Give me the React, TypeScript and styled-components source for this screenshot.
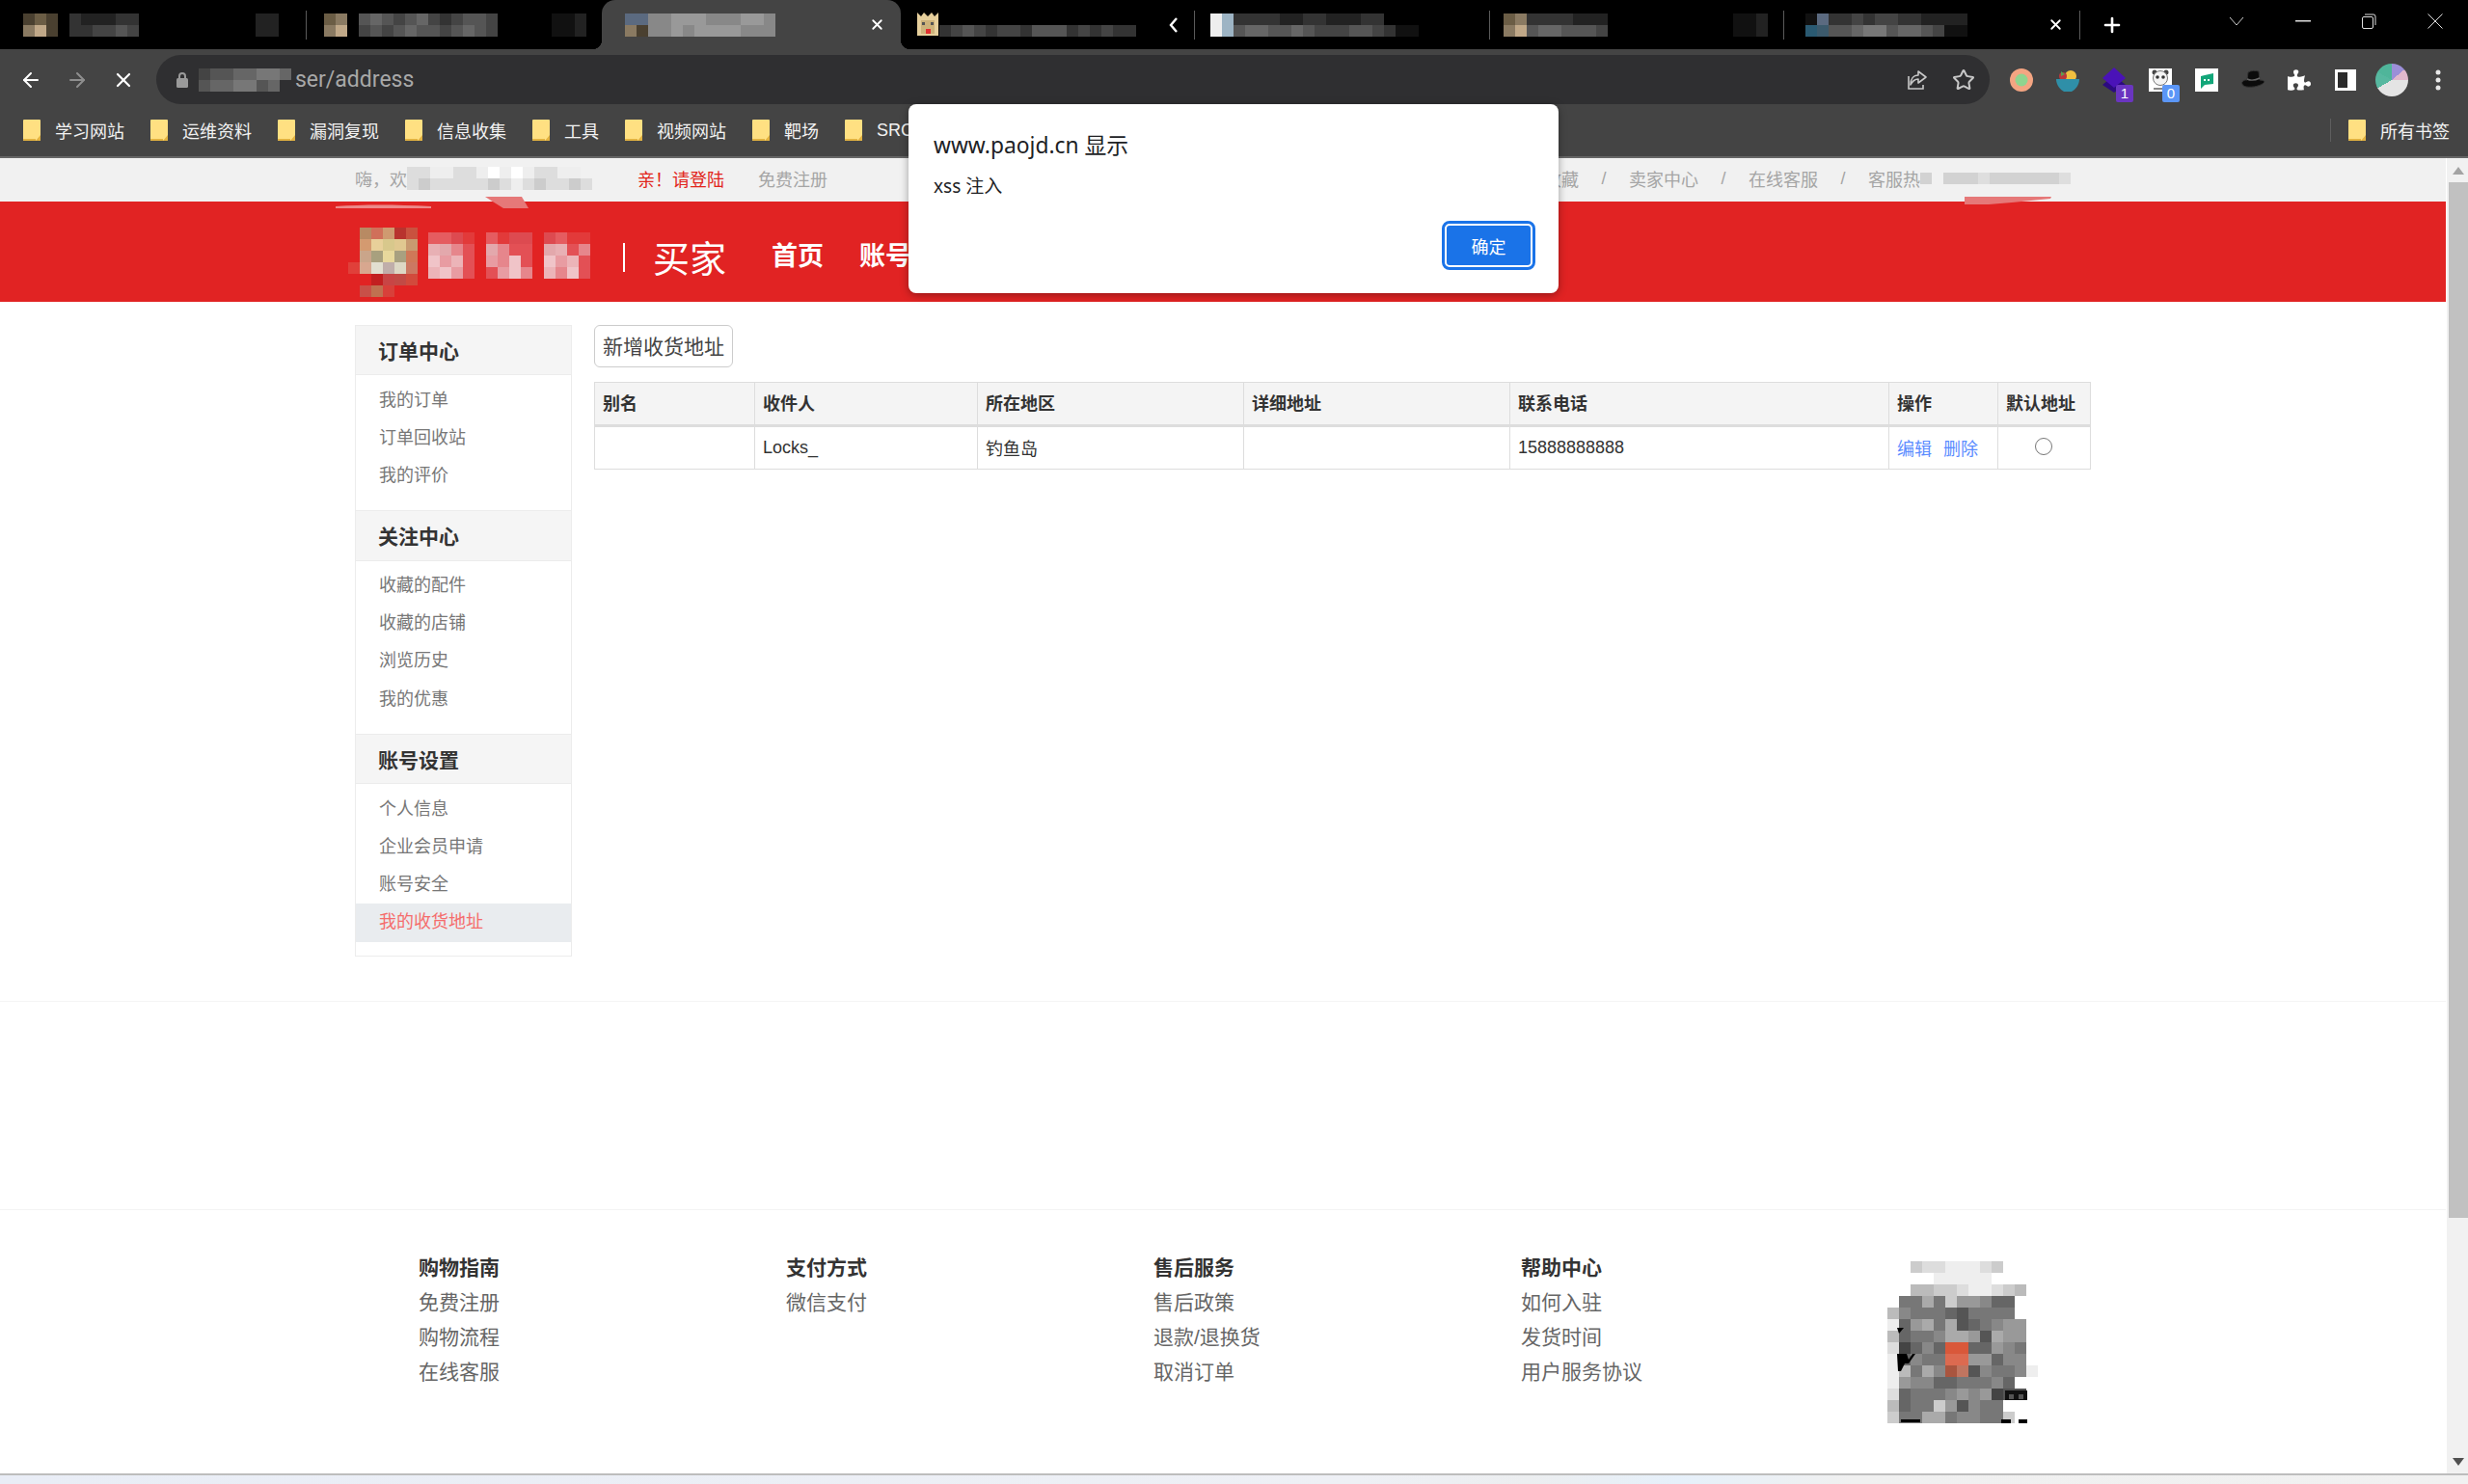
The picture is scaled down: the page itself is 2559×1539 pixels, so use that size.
import React from 'react';
import styled, { createGlobalStyle, css } from 'styled-components';
import { ArrowLeft, ArrowRight, Plus, Star, X } from 'lucide-react';
import { FaPuzzlePiece } from 'react-icons/fa';

const GlobalStyle = createGlobalStyle`
  html, body {
    margin: 0;
    padding: 0;
    background: #000;
  }
  * {
    box-sizing: border-box;
  }
`;

const FONT = `"Liberation Sans", "Noto Sans CJK SC", sans-serif`;

// letters beyond the hex digits are the few coloured blocks of the blurred parts
const COLORS: Record<string, string> = {
  g: '#4a4030', h: '#6b5d45', i: '#c0a888', j: '#8a7a62', k: '#5b6a80', l: '#3c5a6c', m: '#9db4c4',
  n: '#d9583a', o: '#dc6a50', p: '#a9553f', q: '#c07560', r: '#2a5a72',
};

const colorOf = (c: string) => COLORS[c] || '#' + c.repeat(6);

const Mosaic: React.FC<{ rows: string[]; cell?: number; palette?: Record<string, string>; children?: React.ReactNode }> = ({
  rows,
  cell = 12,
  palette,
  children,
}) => (
  <svg width={rows[0].length * cell} height={rows.length * cell} style={{ flex: 'none', display: 'block' }}>
    {rows.map((row, y) =>
      row.split('').map((c, x) =>
        c === '.' ? null : (
          <rect key={`${x}-${y}`} x={x * cell} y={y * cell} width={cell} height={cell} fill={(palette && palette[c]) || colorOf(c)} />
        ),
      ),
    )}
    {children}
  </svg>
);

const App_ = styled.div`
  position: relative;
  width: 2559px;
  height: 1539px;
  overflow: hidden;
  display: flex;
  flex-direction: column;
  font-family: ${FONT};
  background: #fff;
`;

/* ---------- browser chrome ---------- */

const TabStrip = styled.div`
  height: 51px;
  flex: none;
  background: #000;
  display: flex;
  padding-left: 6px;
`;

const activeTab = css`
  background: #444;
  border-radius: 14px 14px 0 0;
  &::before,
  &::after {
    content: '';
    position: absolute;
    bottom: 0;
    width: 10px;
    height: 10px;
  }
  &::before {
    left: -10px;
    background: radial-gradient(circle at 0 0, transparent 10px, #444 10.5px);
  }
  &::after {
    right: -10px;
    background: radial-gradient(circle at 100% 0, transparent 10px, #444 10.5px);
  }
`;

const Tab = styled.div<{ $active?: boolean; $w: number; $pad: number }>`
  position: relative;
  width: ${(p) => p.$w}px;
  height: 51px;
  flex: none;
  display: flex;
  align-items: center;
  padding-left: ${(p) => p.$pad}px;
  padding-right: 16px;
  color: #fff;
  ${(p) => p.$active && activeTab}
`;

const TabSep = styled.div`
  width: 1px;
  height: 30px;
  margin-top: 11px;
  background: #5a5a5a;
  flex: none;
`;

const TabTail = styled.div`
  margin-left: auto;
  display: flex;
  align-items: center;
`;

const PlusBox = styled.div`
  margin-left: 21px;
  width: 24px;
  height: 51px;
  display: flex;
  align-items: center;
  color: #fff;
`;

const WindowControls = styled.div`
  margin-left: auto;
  display: flex;
  align-items: flex-start;
`;

const WinBtn = styled.div`
  width: 68.5px;
  height: 44px;
  display: flex;
  align-items: center;
  justify-content: center;
`;

const Toolbar = styled.div`
  height: 57px;
  flex: none;
  background: #444;
  display: flex;
  padding: 6px 7px 0 8px;
`;

const IconBox = styled.div<{ $color?: string }>`
  width: 48px;
  height: 51px;
  flex: none;
  display: flex;
  align-items: center;
  justify-content: center;
  position: relative;
  color: ${(p) => p.$color || '#fff'};
`;

const AddressBar = styled.div`
  flex: 1;
  height: 51px;
  margin: 0 9px 0 10px;
  background: #2f2f31;
  border-radius: 26px;
  display: flex;
  align-items: center;
  padding: 0 3px 0 20px;
`;

const LockIcon = styled.svg`
  flex: none;
  margin-right: 10px;
`;

const UrlText = styled.span`
  font-family: "Roboto", ${FONT};
  font-size: 23px;
  color: #a8a8a8;
  margin-left: 4px;
`;

const AddressTools = styled.div`
  margin-left: auto;
  display: flex;
`;

const Badge = styled.span<{ $bg: string }>`
  position: absolute;
  right: 4px;
  bottom: 2px;
  width: 18px;
  height: 18px;
  border-radius: 2px;
  background: ${(p) => p.$bg};
  color: #fff;
  font-size: 15px;
  line-height: 18px;
  text-align: center;
`;

const Avatar = styled.div`
  width: 34px;
  height: 34px;
  border-radius: 50%;
  background: conic-gradient(from 300deg, #4fb59a 0 60deg, #9c8fd8 60deg 110deg, #e2b8cc 110deg 150deg, #e4e4e4 150deg 300deg, #57b8a0 300deg 360deg);
`;

const BookmarkBar = styled.div`
  height: 56px;
  flex: none;
  background: #444;
  border-bottom: 2px solid #666;
  display: flex;
  align-items: center;
  gap: 27px;
  padding: 0 19px 0 24px;
  color: #fff;
`;

const Bookmark = styled.div`
  display: flex;
  align-items: center;
  gap: 15px;
  font-size: 18px;
  color: #f2f2f2;
`;

const BookmarkEnd = styled.div`
  margin-left: auto;
  display: flex;
  align-items: center;
  border-left: 1px solid #5e5e5e;
  height: 24px;
  padding-left: 18px;
`;

/* ---------- page ---------- */

const Viewport = styled.div`
  flex: 1;
  min-height: 0;
  display: flex;
`;

const Page = styled.div`
  position: relative;
  width: 2536px;
  flex: none;
  overflow: hidden;
`;

const Scrollbar = styled.div`
  flex: 1;
  background: #f1f1f1;
  display: flex;
  flex-direction: column;
  padding-left: 2px;
  border-left: 1px solid #fff;
`;

const ScrollArrow = styled.div<{ $down?: boolean }>`
  height: 25px;
  flex: none;
  margin-top: ${(p) => (p.$down ? 'auto' : '0')};
  display: flex;
  align-items: center;
  justify-content: center;
  &::before {
    content: '';
    border-left: 6px solid transparent;
    border-right: 6px solid transparent;
    ${(p) => (p.$down ? 'border-top: 8px solid #505050;' : 'border-bottom: 8px solid #a3a3a3;')}
  }
`;

const ScrollThumb = styled.div`
  height: 1074px;
  flex: none;
  background: #c1c1c1;
`;

const Streak = styled.svg<{ $left: number; $top: number }>`
  position: absolute;
  left: ${(p) => p.$left}px;
  top: ${(p) => p.$top}px;
`;

const TopBar = styled.div`
  height: 45px;
  background: #f1f1f1;
  font-size: 18px;
  color: #a5a5a5;
  padding-bottom: 3px;
`;

const Container = styled.div`
  width: 1800px;
  margin: 0 auto;
`;

const TopBarInner = styled(Container)`
  height: 100%;
  display: flex;
  align-items: center;
`;

const LoginLink = styled.span`
  color: #e1251b;
  margin-left: 47px;
`;

const RegLink = styled.span`
  margin-left: 35px;
`;

const TopRight = styled.div`
  margin-left: auto;
  display: flex;
  align-items: center;
  margin-right: 21px;
`;

const Slash = styled.span`
  margin: 0 23.5px;
`;

const RedHeader = styled.div`
  height: 104px;
  background: #e12323;
`;

const RedInner = styled(Container)`
  height: 100%;
  display: flex;
  align-items: center;
  color: #fff;
`;

const LogoImage = styled.div`
  margin: 21px 0 0 -7px;
  flex: none;
`;

const LogoText = styled.div`
  margin: 7px 22px 0 11px;
  flex: none;
`;

const LogoSep = styled.div`
  width: 2px;
  height: 30px;
  margin-top: 12px;
  background: #fff;
  flex: none;
`;

const BuyerTitle = styled.span`
  font-size: 38px;
  margin: 8px 10px 0 29px;
  flex: none;
`;

const NavLink = styled.span`
  font-size: 27px;
  font-weight: 700;
  margin-left: 37px;
  margin-top: 4px;
  flex: none;
`;

const Main = styled(Container)`
  height: 725px;
  display: flex;
  gap: 23px;
  padding-top: 24px;
`;

const Divider = styled.div`
  height: 1px;
  background: #f5f5f5;
`;

const Sidebar = styled.aside`
  width: 225px;
  height: 655px;
  flex: none;
  border: 1px solid #ececec;
`;

const SideHead = styled.div<{ $first?: boolean }>`
  height: ${(p) => (p.$first ? 51 : 52.5)}px;
  background: #f5f5f5;
  border-bottom: 1px solid #ececec;
  border-top: ${(p) => (p.$first ? 'none' : '1px solid #ececec')};
  padding-left: 23px;
  font-size: 21px;
  font-weight: 700;
  color: #333;
  display: flex;
  align-items: center;
`;

const SideList = styled.ul`
  list-style: none;
  margin: 0;
  padding: 6.5px 0 16px;
`;

const SideItem = styled.li<{ $active?: boolean }>`
  height: 39.2px;
  line-height: 39.2px;
  padding-left: 24px;
  font-size: 18px;
  color: ${(p) => (p.$active ? '#f56c6c' : '#777')};
  background: ${(p) => (p.$active ? '#e9ecef' : 'transparent')};
`;

const Content = styled.div`
  flex: 1;
  min-width: 0;
`;

const AddButton = styled.button`
  display: block;
  height: 44px;
  padding: 0 8px 3px;
  background: #fff;
  border: 1px solid #ccc;
  border-radius: 6px;
  font-family: ${FONT};
  font-size: 21px;
  color: #444;
  margin-bottom: 15px;
`;

const Table = styled.table`
  width: 1551px;
  table-layout: fixed;
  border-collapse: collapse;
  font-size: 18px;
  color: #333;
`;

const Col = styled.col<{ $w: number }>`
  width: ${(p) => p.$w}px;
`;

const Th = styled.th`
  height: 45px;
  background: #f4f4f4;
  border: 1px solid #ddd;
  border-bottom: 3px solid #ddd;
  padding: 0 8px 3px;
  text-align: left;
  font-weight: 700;
`;

const Td = styled.td`
  height: 45px;
  border: 1px solid #ddd;
  padding: 0 8px 1px;
`;

const TdCenter = styled(Td)`
  text-align: center;
`;

const RowLink = styled.a`
  color: #5b8cff;
  margin-right: 12px;
`;

const Radio = styled.input`
  width: 18px;
  height: 18px;
  margin: -3px 0 0 -2px;
  vertical-align: middle;
`;

const Spacer = styled.div`
  height: 215px;
`;

const Footer = styled.footer`
  border-top: 1px solid #f3f3f3;
`;

const FooterInner = styled(Container)`
  display: flex;
  padding: 42px 0 0 66px;
`;

const FooterCol = styled.div`
  width: 381px;
  flex: none;
  font-size: 21px;
  line-height: 36px;
  color: #666;
`;

const FooterColShort = styled(FooterCol)`
  width: 380px;
`;

const FooterTitle = styled.div`
  font-weight: 700;
  color: #333;
`;

const QrBox = styled.div`
  margin-top: 11px;
`;

const BottomStrip = styled.div`
  height: 11px;
  flex: none;
  border-top: 2px solid #bdbdbd;
  background: linear-gradient(90deg, #e9edf6 0, #eef0f5 55%, #eceef0 62%, #e6f0fa 68%, #f0f0f0 75%, #f1f1f1 100%);
`;

/* ---------- alert ---------- */

const Alert = styled.div`
  position: absolute;
  left: 942px;
  top: 108px;
  width: 674px;
  height: 196px;
  background: #fff;
  border-radius: 8px;
  box-shadow: 0 2px 8px rgba(0, 0, 0, 0.35);
  padding: 27px 24px 24px 26px;
  display: flex;
  flex-direction: column;
  font-family: "Noto Sans", "Noto Sans CJK SC", sans-serif;
  color: #202124;
`;

const AlertTitle = styled.div`
  font-size: 22.8px;
  line-height: 32px;
`;

const AlertBody = styled.div`
  font-size: 19px;
  line-height: 26px;
  margin-top: 13px;
`;

const AlertButton = styled.button`
  margin: auto 3px 3px auto;
  width: 91px;
  height: 45px;
  background: #1a73e8;
  color: #fff;
  border: 2px solid #fff;
  border-radius: 5px;
  outline: 3px solid #1a73e8;
  font-family: "Noto Sans CJK SC", sans-serif;
  font-size: 18px;
  padding: 0;
`;

/* ---------- small drawings ---------- */

const Folder = () => (
  <svg width="18" height="22" viewBox="0 0 18 22">
    <path d="M1 0h16a1 1 0 0 1 1 1v20a1 1 0 0 1-1 1H1a1 1 0 0 1-1-1V1a1 1 0 0 1 1-1z" fill="#ffe082" />
    <path d="M13 22l5-6v5a1 1 0 0 1-1 1z M0 20h13v2H1a1 1 0 0 1-1-1z" fill="#e3b341" />
  </svg>
);

const Lock = () => (
  <LockIcon width="14" height="18" viewBox="0 0 14 18">
    <rect x="1" y="7" width="12" height="10" rx="1.5" fill="#9a9a9a" />
    <path d="M4 7V5a3 3 0 0 1 6 0v2" stroke="#9a9a9a" strokeWidth="2" fill="none" />
  </LockIcon>
);

const ShareIcon = () => (
  <svg width="24" height="24" viewBox="0 0 24 24" fill="none" stroke="#c8c8c8" strokeWidth="1.6">
    <path d="M3 8v13h15v-4" />
    <path d="M13 3l8 6-8 6v-4c-4 0-6 2-8 6 0-6 3-10 8-10z" strokeLinejoin="round" />
  </svg>
);

const BowlIcon = () => (
  <svg width="24" height="24" viewBox="0 0 24 24">
    <circle cx="15" cy="8" r="6" fill="#f0c040" />
    <circle cx="7" cy="8" r="4" fill="#b8383c" />
    <path d="M5 3l4 3-4 2z" fill="#5aa050" />
    <path d="M0 11h24c0 6-4 11-8 13H8C4 22 0 17 0 11z" fill="#2f8fa8" />
  </svg>
);

const DiamondIcon = () => (
  <svg width="24" height="26" viewBox="0 0 24 26">
    <path d="M12 8l12 10-12 8L0 18z" fill="#2c0a80" />
    <path d="M12 0l12 11-12 10L0 11z" fill="#4a12b8" />
  </svg>
);

const PandaIcon = () => (
  <svg width="24" height="24" viewBox="0 0 24 24">
    <rect width="24" height="24" fill="#fff" />
    <circle cx="6" cy="4" r="2.5" fill="#444" />
    <circle cx="18" cy="4" r="2.5" fill="#444" />
    <circle cx="12" cy="10" r="7.5" fill="#f4f4f4" stroke="#777" />
    <circle cx="9" cy="9" r="1.8" fill="#333" />
    <circle cx="15" cy="9" r="1.8" fill="#333" />
    <rect x="5" y="20" width="14" height="2" fill="#888" />
  </svg>
);

const ChatIcon = () => (
  <svg width="24" height="24" viewBox="0 0 24 24">
    <rect width="24" height="24" fill="#fff" />
    <path d="M6 8l13-3v11l-9 1-4 4z" fill="#12a679" />
    <rect x="9" y="11" width="2" height="2" fill="#fff" />
    <rect x="13" y="11" width="2" height="2" fill="#fff" />
  </svg>
);

const HatIcon = () => (
  <svg width="26" height="24" viewBox="0 0 26 24">
    <path d="M8 4c3-2 8-2 11-1l1 9c3 0 5 1 5 2-3 4-12 6-19 5-4-1-5-4-4-5 1-2 3-2 5-2z" fill="#0b0b0b" stroke="#333" />
    <path d="M7 11c4 2 9 1 13-1" stroke="#666" strokeWidth="1.4" fill="none" />
  </svg>
);

const PanelIcon = () => (
  <svg width="22" height="22" viewBox="0 0 22 22">
    <rect width="22" height="22" fill="#fff" />
    <rect x="3" y="3" width="10" height="16" fill="#2b2b2b" />
  </svg>
);

const Dots = () => (
  <svg width="6" height="24" viewBox="0 0 6 24" fill="#e8e8e8">
    <circle cx="3" cy="4" r="2.5" />
    <circle cx="3" cy="12" r="2.5" />
    <circle cx="3" cy="20" r="2.5" />
  </svg>
);

const CrownFav = () => (
  <svg width="24" height="30" viewBox="0 0 24 30" style={{ flex: 'none' }}>
    <path d="M1 2l4 4 3-4 4 4 4-4 3 4 4-4v24H1z" fill="#e6cf9c" />
    <rect x="5" y="10" width="14" height="14" fill="#cdb27a" />
    <rect x="6" y="12" width="3" height="3" fill="#555" />
    <rect x="15" y="12" width="3" height="3" fill="#555" />
    <rect x="10" y="19" width="5" height="5" fill="#e03030" />
  </svg>
);

const ChevronMark = () => (
  <svg width="10" height="16" viewBox="0 0 10 16" fill="none" stroke="#fff" strokeWidth="2.4">
    <path d="M8 1L2 8l6 7" />
  </svg>
);

const TabClose = () => <X size={17} strokeWidth={2.6} />;

const QR_ROWS = [
  '..cddeeedc...',
  '..ffeeeeef...',
  '.fbbccdeedcbf',
  'f77a7c99866.f',
  'b8777657777.f',
  'e69a7a567899f',
  'b6778aa95a99f',
  'd4686nn66987f',
  'e6877oo99688f',
  'eb7a8pq58778e',
  'e9886677786.f',
  'd67778989455f',
  'b677c95877.f.',
  'c77aa78877c..',
];

const LOGO_ROWS = ['hijnkl', 'opqrst', 'uvwxyz', 'ABCDEF', 'GHIJKL', '.MNO..'];
const LOGO_PALETTE: Record<string, string> = {
  h: '#e12323', i: '#b88a63', j: '#d0705a', n: '#cf9a70', k: '#b8332e', l: '#c9523f',
  o: '#e12323', p: '#d49a70', q: '#e8d09a', r: '#d8c88c', s: '#e0c890', t: '#c89a70',
  u: '#e12323', v: '#caa58a', w: '#a8a07e', x: '#e8d89c', y: '#a8a080', z: '#cf7858',
  A: '#e0403a', B: '#d8a78f', C: '#e2dfd0', D: '#c0aeaa', E: '#ddd8c5', F: '#cc7862',
  G: '#e12323', H: '#e12323', I: '#c21f20', J: '#c84545', K: '#c24a45', L: '#d24a3c',
  M: '#c85048', N: '#c07050', O: '#d8403a',
};

const LOGO_TEXT_ROWS = [
  'hhgj.hjgg.ghjj.',
  'pqrs.qrss.qpsr.',
  'tuvs.urts.tuvs.',
  'vtus.sutr.vrts.',
];
const LOGO_TEXT_PALETTE: Record<string, string> = {
  g: '#dd4a50', h: '#e55c60', j: '#e23a3a',
  p: '#e8b0b4', q: '#e3a8ac', r: '#e6868c', s: '#e35055',
  t: '#f0c4c8', u: '#e89ca2', v: '#ecb4b8',
};

const TABS = [
  { w: 311, pad: 18, rows: ['ghg.322233', 'jig.334454'], tail: ['22.', '22.'], sep: true },
  { w: 306, pad: 18, rows: ['hj.565456434554', 'ji.454565545654'], tail: ['112', '112'], sep: false },
];

const App: React.FC = () => (
  <App_>
    <GlobalStyle />
    <TabStrip>
      {TABS.map((t) => (
        <React.Fragment key={t.rows[0]}>
          <Tab $w={t.w} $pad={t.pad}>
            <Mosaic rows={t.rows} />
            <TabTail>
              <Mosaic rows={t.tail} />
            </TabTail>
          </Tab>
          {t.sep && <TabSep />}
        </React.Fragment>
      ))}
      <Tab $active $w={310} $pad={24}>
        <Mosaic rows={['kk88999888998', 'jg88989999888']} />
        <TabTail>
          <TabClose />
        </TabTail>
      </Tab>
      <Tab $w={304} $pad={16}>
        <CrownFav />
        <Mosaic rows={['.................', '34543443555343433']} />
        <TabTail>
          <ChevronMark />
        </TabTail>
      </Tab>
      <TabSep />
      <Tab $w={305} $pad={16}>
        <Mosaic rows={['em3333223322233....', 'em5665565444554311.']} />
      </Tab>
      <TabSep />
      <Tab $w={304} $pad={14}>
        <Mosaic rows={['hj3333222', 'ji5665554']} />
        <TabTail>
          <Mosaic rows={['112', '112']} />
        </TabTail>
      </Tab>
      <TabSep />
      <Tab $w={306} $pad={22}>
        <Mosaic rows={['1k334344332222', 'rl556775665411']} />
        <TabTail>
          <TabClose />
        </TabTail>
      </Tab>
      <TabSep />
      <PlusBox>
        <Plus size={24} strokeWidth={2.6} />
      </PlusBox>
      <WindowControls>
        <WinBtn>
          <svg width="16" height="10" viewBox="0 0 16 10" fill="none" stroke="#ccc">
            <path d="M1 1l7 8 7-8" />
          </svg>
        </WinBtn>
        <WinBtn>
          <svg width="16" height="2" viewBox="0 0 16 2">
            <rect width="16" height="1.5" fill="#ddd" />
          </svg>
        </WinBtn>
        <WinBtn>
          <svg width="16" height="16" viewBox="0 0 16 16" fill="none" stroke="#ddd">
            <rect x="1.5" y="3.5" width="11" height="12" rx="1.5" />
            <path d="M4 1h9a2 2 0 0 1 2 2v9" />
          </svg>
        </WinBtn>
        <WinBtn>
          <svg width="16" height="16" viewBox="0 0 16 16" stroke="#ddd">
            <path d="M0.5 0.5l15 15M15.5 0.5l-15 15" />
          </svg>
        </WinBtn>
      </WindowControls>
    </TabStrip>

    <Toolbar>
      <IconBox>
        <ArrowLeft size={24} strokeWidth={2} />
      </IconBox>
      <IconBox $color="#8e8e8e">
        <ArrowRight size={24} strokeWidth={2} />
      </IconBox>
      <IconBox>
        <X size={24} strokeWidth={2.2} />
      </IconBox>
      <AddressBar>
        <Lock />
        <Mosaic rows={['45566776', '5667756.']} />
        <UrlText>ser/address</UrlText>
        <AddressTools>
          <IconBox>
            <ShareIcon />
          </IconBox>
          <IconBox $color="#c8c8c8">
            <Star size={24} strokeWidth={2} />
          </IconBox>
        </AddressTools>
      </AddressBar>
      <IconBox>
        <svg width="24" height="24" viewBox="0 0 24 24">
          <circle cx="12" cy="12" r="12" fill="#f4a582" />
          <circle cx="12" cy="12" r="6.5" fill="#8fd48f" />
        </svg>
      </IconBox>
      <IconBox>
        <BowlIcon />
      </IconBox>
      <IconBox>
        <DiamondIcon />
        <Badge $bg="#6a35c0">1</Badge>
      </IconBox>
      <IconBox>
        <PandaIcon />
        <Badge $bg="#5b96f7">0</Badge>
      </IconBox>
      <IconBox>
        <ChatIcon />
      </IconBox>
      <IconBox>
        <HatIcon />
      </IconBox>
      <IconBox>
        <FaPuzzlePiece size={24} />
      </IconBox>
      <IconBox>
        <PanelIcon />
      </IconBox>
      <IconBox>
        <Avatar />
      </IconBox>
      <IconBox>
        <Dots />
      </IconBox>
    </Toolbar>

    <BookmarkBar>
      {['学习网站', '运维资料', '漏洞复现', '信息收集', '工具', '视频网站', '靶场', 'SRC'].map((b) => (
        <Bookmark key={b}>
          <Folder />
          {b}
        </Bookmark>
      ))}
      <BookmarkEnd>
        <Bookmark>
          <Folder />
          所有书签
        </Bookmark>
      </BookmarkEnd>
    </BookmarkBar>

    <Viewport>
      <Page>
        <TopBar>
          <TopBarInner>
            <span>嗨，欢</span>
            <Mosaic rows={['ddeeddefefeddee.', 'dcdddddcdedcddcd']} />
            <LoginLink>亲！请登陆</LoginLink>
            <RegLink>免费注册</RegLink>
            <TopRight>
              <span>我的收藏</span>
              <Slash>/</Slash>
              <span>卖家中心</span>
              <Slash>/</Slash>
              <span>在线客服</span>
              <Slash>/</Slash>
              <span>客服热</span>
              <Mosaic rows={['d.dddedddddde']} palette={{ d: '#d2d2d2', e: '#dedede' }} />
            </TopRight>
          </TopBarInner>
        </TopBar>
        <RedHeader>
          <RedInner>
            <LogoImage>
              <Mosaic rows={LOGO_ROWS} palette={LOGO_PALETTE} />
            </LogoImage>
            <LogoText>
              <Mosaic rows={LOGO_TEXT_ROWS} palette={LOGO_TEXT_PALETTE} />
            </LogoText>
            <LogoSep />
            <BuyerTitle>买家</BuyerTitle>
            <NavLink>首页</NavLink>
            <NavLink>账号</NavLink>
          </RedInner>
        </RedHeader>

        <Main>
          <Sidebar>
            <SideHead $first>订单中心</SideHead>
            <SideList>
              <SideItem>我的订单</SideItem>
              <SideItem>订单回收站</SideItem>
              <SideItem>我的评价</SideItem>
            </SideList>
            <SideHead>关注中心</SideHead>
            <SideList>
              <SideItem>收藏的配件</SideItem>
              <SideItem>收藏的店铺</SideItem>
              <SideItem>浏览历史</SideItem>
              <SideItem>我的优惠</SideItem>
            </SideList>
            <SideHead>账号设置</SideHead>
            <SideList>
              <SideItem>个人信息</SideItem>
              <SideItem>企业会员申请</SideItem>
              <SideItem>账号安全</SideItem>
              <SideItem $active>我的收货地址</SideItem>
            </SideList>
          </Sidebar>
          <Content>
            <AddButton>新增收货地址</AddButton>
            <Table>
              <colgroup>
                <Col $w={166} />
                <Col $w={231} />
                <Col $w={276} />
                <Col $w={276} />
                <Col $w={393} />
                <Col $w={113} />
                <Col $w={96} />
              </colgroup>
              <thead>
                <tr>
                  <Th>别名</Th>
                  <Th>收件人</Th>
                  <Th>所在地区</Th>
                  <Th>详细地址</Th>
                  <Th>联系电话</Th>
                  <Th>操作</Th>
                  <Th>默认地址</Th>
                </tr>
              </thead>
              <tbody>
                <tr>
                  <Td />
                  <Td>Locks_</Td>
                  <Td>钓鱼岛</Td>
                  <Td />
                  <Td>15888888888</Td>
                  <Td>
                    <RowLink>编辑</RowLink>
                    <RowLink>删除</RowLink>
                  </Td>
                  <TdCenter>
                    <Radio type="radio" name="def" />
                  </TdCenter>
                </tr>
              </tbody>
            </Table>
          </Content>
        </Main>
        <Divider />
        <Spacer />
        <Footer>
          <FooterInner>
            <FooterCol>
              <FooterTitle>购物指南</FooterTitle>
              <div>免费注册</div>
              <div>购物流程</div>
              <div>在线客服</div>
            </FooterCol>
            <FooterCol>
              <FooterTitle>支付方式</FooterTitle>
              <div>微信支付</div>
            </FooterCol>
            <FooterCol>
              <FooterTitle>售后服务</FooterTitle>
              <div>售后政策</div>
              <div>退款/退换货</div>
              <div>取消订单</div>
            </FooterCol>
            <FooterColShort>
              <FooterTitle>帮助中心</FooterTitle>
              <div>如何入驻</div>
              <div>发货时间</div>
              <div>用户服务协议</div>
            </FooterColShort>
            <QrBox>
              <Mosaic rows={QR_ROWS}>
                <path d="M10 69l7 0-5 6z" fill="#000" />
                <path d="M10 96h10l2 6 4-6h3l-7 10-4 0-4 8-3 0z" fill="#000" />
                <path d="M122 134h23v10h-23z M126 138v5h5v-5z M136 138v5h5v-5z" fill="#111" fillRule="evenodd" />
                <path d="M14 164h20v3H14z M118 164h10v4h-10z M136 164h9v4h-9z" fill="#000" />
              </Mosaic>
            </QrBox>
          </FooterInner>
        </Footer>

        <Streak $left={348} $top={40} width="200" height="14" viewBox="0 0 200 14">
          <path d="M155 0h38l7 12h-26z" fill="#e67878" />
          <path d="M0 10c30-2 60-2 99 0v2H0z" fill="#ec8a8a" />
        </Streak>
        <Streak $left={2037} $top={40} width="90" height="8" viewBox="0 0 90 8">
          <path d="M0 0h90l-1 2-40 4-24 2H0z" fill="#e67878" />
        </Streak>
      </Page>
      <Scrollbar>
        <ScrollArrow />
        <ScrollThumb />
        <ScrollArrow $down />
      </Scrollbar>
    </Viewport>
    <BottomStrip />

    <Alert>
      <AlertTitle>www.paojd.cn 显示</AlertTitle>
      <AlertBody>xss 注入</AlertBody>
      <AlertButton>确定</AlertButton>
    </Alert>
  </App_>
);

export default App;
